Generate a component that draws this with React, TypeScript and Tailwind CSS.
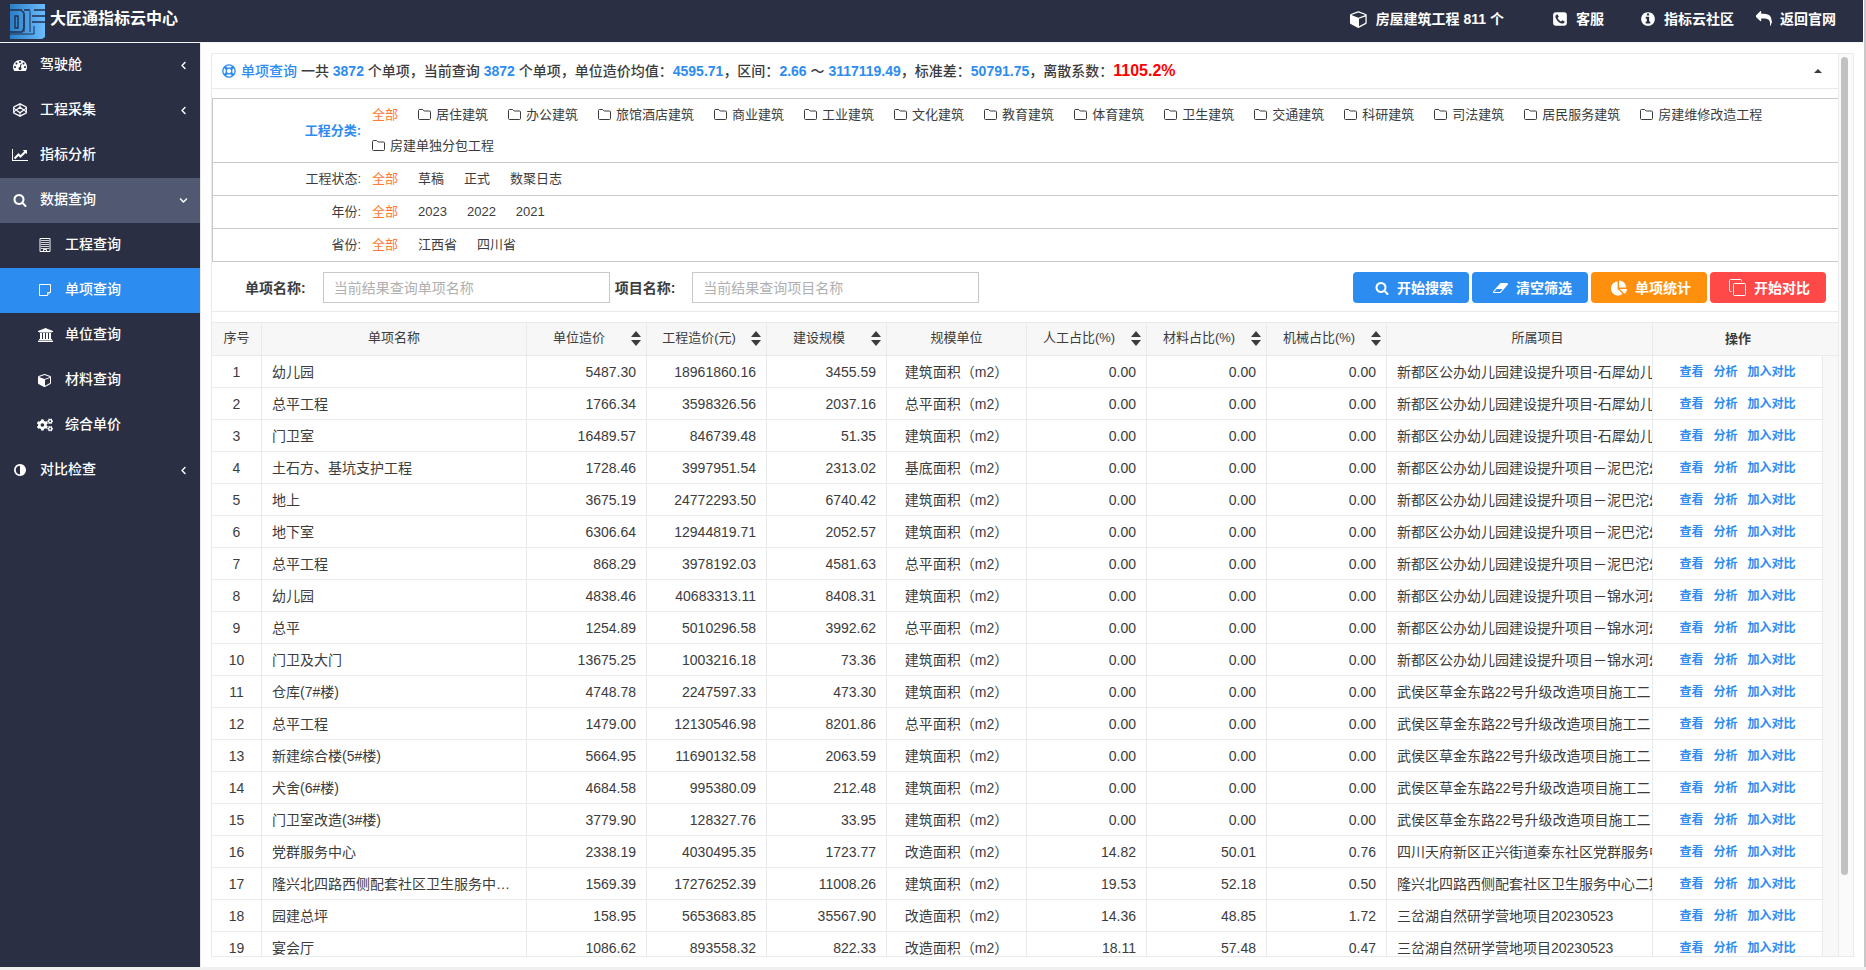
import type { ReactNode } from "react";
import { FaChartPie, FaChevronDown, FaChevronLeft, FaCogs, FaRegLifeRing } from "react-icons/fa";

const FONT = "font-['Liberation_Sans','Noto_Sans_CJK_SC',sans-serif]";

type GlyphProps = { size?: number; viewBox?: string; d: string };

function Glyph({ size = 14, viewBox = "0 0 1792 1792", d }: GlyphProps) {
  const [, , w, h] = viewBox.split(" ").map(Number);
  return (
    <svg width={(size * w) / h} height={size} viewBox={viewBox} fill="currentColor" className="shrink-0" aria-hidden="true">
      <path d={d} />
    </svg>
  );
}

const CUBE = "M896 1629l640-349v-636l-640 233v752zM832 764l698-254-698-254-698 254zM1664 512v768q0 35-18 65t-49 47l-704 384q-28 16-61 16t-61-16l-704-384q-31-17-49-47t-18-65v-768q0-40 23-73t61-47l704-256q22-8 44-8t44 8l704 256q38 14 61 47t23 73z";
const SEARCH = "M1216 832q0-185-131.5-316.5t-316.5-131.5-316.5 131.5-131.5 316.5 131.5 316.5 316.5 131.5 316.5-131.5 131.5-316.5zm512 832q0 52-38 90t-90 38q-54 0-90-38l-343-342q-179 124-399 124-143 0-273.5-55.5t-225-150-150-225-55.5-273.5 55.5-273.5 150-225 225-150 273.5-55.5 273.5 55.5 225 150 150 225 55.5 273.5q0 220-124 399l343 343q37 37 37 90z";
const GAUGE = "M384 1152q0-53-37.5-90.5t-90.5-37.5-90.5 37.5-37.5 90.5 37.5 90.5 90.5 37.5 90.5-37.5 37.5-90.5zm192-448q0-53-37.5-90.5t-90.5-37.5-90.5 37.5-37.5 90.5 37.5 90.5 90.5 37.5 90.5-37.5 37.5-90.5zm428 481l101-382q6-26-7.5-48.5t-38.5-29.5-48 6.5-30 39.5l-101 382q-60 5-107 43.5t-63 98.5q-20 77 20 146t117 89 146-20 89-117q16-60-6-117t-72-91zm660-33q0-53-37.5-90.5t-90.5-37.5-90.5 37.5-37.5 90.5 37.5 90.5 90.5 37.5 90.5-37.5 37.5-90.5zm-640-640q0-53-37.5-90.5t-90.5-37.5-90.5 37.5-37.5 90.5 37.5 90.5 90.5 37.5 90.5-37.5 37.5-90.5zm448 192q0-53-37.5-90.5t-90.5-37.5-90.5 37.5-37.5 90.5 37.5 90.5 90.5 37.5 90.5-37.5 37.5-90.5zm320 448q0 261-141 483-19 29-54 29h-1402q-35 0-54-29-141-221-141-483 0-182 71-348t191-286 286-191 348-71 348 71 286 191 191 286 71 348z";
const LINE_CHART = "M2048 1536v128h-2048v-1536h128v1408h1920zm-128-1248v435q0 21-19.5 29.5t-35.5-7.5l-121-121-633 633q-10 10-23 10t-23-10l-233-233-416 416-192-192 585-585q10-10 23-10t23 10l233 233 464-464-121-121q-16-16-7.5-35.5t29.5-19.5h435q14 0 23 9t9 23z";
const BANK = "M960 0l960 384v128h-128q0 26-20.5 45t-48.5 19h-1526q-28 0-48.5-19t-20.5-45h-128v-128zm-704 640h256v768h128v-768h256v768h128v-768h256v768h128v-768h256v768h59q28 0 48.5 19t20.5 45v64h-1664v-64q0-26 20.5-45t48.5-19h59v-768zm1595 960q28 0 48.5 19t20.5 45v128h-1920v-128q0-26 20.5-45t48.5-19h1782z";
const HALF_CIRCLE = "M896 1440v-1088q-148 0-273 73t-198 198-73 273 73 273 198 198 273 73zm768-544q0 209-103 385.5t-279.5 279.5-385.5 103-385.5-103-279.5-279.5-103-385.5 103-385.5 279.5-279.5 385.5-103 385.5 103 279.5 279.5 103 385.5z";
const INFO = "M1152 1376v-160q0-14-9-23t-23-9h-96v-512q0-14-9-23t-23-9h-320q-14 0-23 9t-9 23v160q0 14 9 23t23 9h96v320h-96q-14 0-23 9t-9 23v160q0 14 9 23t23 9h448q14 0 23-9t9-23zm-128-896v-160q0-14-9-23t-23-9h-192q-14 0-23 9t-9 23v160q0 14 9 23t23 9h192q14 0 23-9t9-23zm640 416q0 209-103 385.5t-279.5 279.5-385.5 103-385.5-103-279.5-279.5-103-385.5 103-385.5 279.5-279.5 385.5-103 385.5 103 279.5 279.5 103 385.5z";
const REPLY = "M1792 1120q0 166-127 451-3 7-10.5 24t-13.5 30-13 22q-12 17-28 17-15 0-23.5-10t-8.5-25q0-9 2.5-26.5t2.5-23.5q5-68 5-123 0-112-19.5-200.5t-54-153.5-89-112-115.5-78.5-144-49.5-164.5-24-187-6.5h-224v256q0 26-19 45t-45 19-45-19l-512-512q-19-19-19-45t19-45l512-512q19-19 45-19t45 19 19 45v256h224q713 0 875 403 53 134 53 333z";
const PHONE = "M1408 1193q0-11-2-16t-18-16.5-40.5-25-47.5-26.5-45.5-25-28.5-15q-5-3-19-13t-25-15-21-5q-15 0-36.5 20.5t-39.5 45-38.5 45-33.5 20.5q-7 0-16.5-3.5t-15.5-6.5-17-9.5-14-8.5q-99-55-170-126.5t-127-170.5q-2-3-8.5-14t-9.5-17-6.5-15.5-3.5-16.5q0-13 20.5-33.5t45-38.5 45-39.5 20.5-36.5q0-10-5-21t-15-25-13-19q-3-6-15-28.5t-25-45.5-26.5-47.5-25-40.5-16.5-18-16-2q-48 0-101 22-46 21-80 94.5t-34 130.5q0 16 2.5 34t5 30.5 9 33 10 29.5 12.5 33 11 30q60 164 216.5 320.5t320.5 216.5q6 2 30 11t33 12.5 29.5 10 33 9 30.5 5 34 2.5q57 0 130.5-34t94.5-80q22-53 22-101zm256-777v960q0 119-84.5 203.5t-203.5 84.5h-960q-119 0-203.5-84.5t-84.5-203.5v-960q0-119 84.5-203.5t203.5-84.5h960q119 0 203.5 84.5t84.5 203.5z";
const ERASER = "M896 1408l336-384h-768l-336 384h768zm1013-1077q15 34 9.5 71.5t-30.5 65.5l-896 1024q-38 44-96 44h-768q-38 0-69.5-20.5t-47.5-54.5q-15-34-9.5-71.5t30.5-65.5l896-1024q38-44 96-44h768q38 0 69.5 20.5t47.5 54.5z";

function HexIcon() {
  return (
    <svg width="14" height="14" viewBox="0 0 14 14" fill="none" stroke="currentColor" strokeWidth="1.4" strokeLinejoin="round" aria-hidden="true">
      <path d="M7 .8 13.2 4v6L7 13.2.8 10V4z" />
      <path d="M7 4.2 10.8 7 7 9.8 3.2 7z" />
      <path d="M7 .8v3.4M7 9.8v3.4M.8 4.8l2.4 2.2L.8 9.2M13.2 4.8 10.8 7l2.4 2.2" strokeWidth="1" />
    </svg>
  );
}

function BuildingIcon() {
  return (
    <svg width="12" height="14" viewBox="0 0 12 14" fill="none" stroke="currentColor" aria-hidden="true">
      <path d="M1 .5h10v13H1z" />
      <path d="M2 2.5h8M2 4.5h8M2 6.5h8M2 8.5h8M2 10.5h8" opacity=".8" />
      <path d="M4.5 13v-1.5h3V13" />
    </svg>
  );
}

function NoteIcon() {
  return (
    <svg width="12" height="12" viewBox="0 0 12 12" fill="none" stroke="currentColor" aria-hidden="true">
      <path d="M.5.5h11v7.6l-3.4 3.4H.5z" />
      <path d="M11.5 8.5h-3v3" />
    </svg>
  );
}

function CopyIcon() {
  return (
    <svg width="17" height="17" viewBox="0 0 17 17" fill="none" stroke="currentColor" aria-hidden="true">
      <rect x="4.5" y="4.5" width="12" height="12" rx="1" />
      <path d="M2.5 12.5h-1a1 1 0 0 1-1-1v-10a1 1 0 0 1 1-1h10a1 1 0 0 1 1 1v1" />
    </svg>
  );
}

function FolderIcon() {
  return (
    <svg width="13" height="11" viewBox="0 0 13 11" fill="none" stroke="currentColor" aria-hidden="true">
      <path d="M.5 1.5a1 1 0 0 1 1-1h3.2l1.5 1.5h5.3a1 1 0 0 1 1 1v6.5a1 1 0 0 1-1 1h-10a1 1 0 0 1-1-1z" />
    </svg>
  );
}

// the strokes are the gaps between the three letter shapes
function Logo() {
  return (
    <svg width="35" height="35" viewBox="0 0 35 35" aria-hidden="true">
      <defs>
        <linearGradient id="logo" x1="0" x2="1" y1="0" y2="0">
          <stop offset="0" stopColor="#2a7fc8" />
          <stop offset="1" stopColor="#6cbcff" />
        </linearGradient>
      </defs>
      <path d="M0 0h35v33l-3 2H0z" fill="url(#logo)" />
      <g fill="none" stroke="#22304e">
        <path d="M0 6h11l3 3v15l-2 4H0M14 6h6M24 6h11" strokeWidth="1.4" />
        <path d="M5 12h3v12H5z" strokeWidth="1.4" />
        <path d="M14 28V10M20 7v21M22 30h2v-8M0 30h22" strokeWidth="1" />
        <path d="M22 12h13M22 18h13" strokeWidth="1.4" />
      </g>
    </svg>
  );
}

type NavItem = { label: string; icon: ReactNode; child?: boolean; arrow?: "left" | "down"; active?: boolean };

const nav: NavItem[] = [
  { label: "驾驶舱", icon: <Glyph d={GAUGE} />, arrow: "left" },
  { label: "工程采集", icon: <HexIcon />, arrow: "left" },
  { label: "指标分析", icon: <Glyph d={LINE_CHART} viewBox="0 0 2048 1792" /> },
  { label: "数据查询", icon: <Glyph d={SEARCH} />, arrow: "down" },
  { label: "工程查询", icon: <BuildingIcon />, child: true },
  { label: "单项查询", icon: <NoteIcon />, child: true, active: true },
  { label: "单位查询", icon: <Glyph d={BANK} viewBox="0 0 1920 1792" />, child: true },
  { label: "材料查询", icon: <Glyph d={CUBE} />, child: true },
  { label: "综合单价", icon: <FaCogs size={16} />, child: true },
  { label: "对比检查", icon: <Glyph d={HALF_CIRCLE} />, arrow: "left" },
];

const categories = [
  "居住建筑", "办公建筑", "旅馆酒店建筑", "商业建筑", "工业建筑", "文化建筑", "教育建筑", "体育建筑",
  "卫生建筑", "交通建筑", "科研建筑", "司法建筑", "居民服务建筑", "房建维修改造工程", "房建单独分包工程",
];

const filters = [
  { label: "工程分类:", options: categories, folder: true },
  { label: "工程状态:", options: ["草稿", "正式", "数聚日志"] },
  { label: "年份:", options: ["2023", "2022", "2021"] },
  { label: "省份:", options: ["江西省", "四川省"] },
];

const columns = [
  { title: "序号", width: "w-[50px]" },
  { title: "单项名称", width: "w-[265px]" },
  { title: "单位造价", width: "w-[120px]", sort: true },
  { title: "工程造价(元)", width: "w-[120px]", sort: true },
  { title: "建设规模", width: "w-[120px]", sort: true },
  { title: "规模单位", width: "w-[140px]" },
  { title: "人工占比(%)", width: "w-[120px]", sort: true },
  { title: "材料占比(%)", width: "w-[120px]", sort: true },
  { title: "机械占比(%)", width: "w-[120px]", sort: true },
  { title: "所属项目", width: "pl-9" },
];

const SX = "新都区公办幼儿园建设提升项目-石犀幼儿";
const NB = "新都区公办幼儿园建设提升项目－泥巴沱幼";
const JS = "新都区公办幼儿园建设提升项目－锦水河幼";
const WH = "武侯区草金东路22号升级改造项目施工二";

const rows = [
  ["幼儿园", "5487.30", "18961860.16", "3455.59", "建筑面积（m2）", "0.00", "0.00", "0.00", SX],
  ["总平工程", "1766.34", "3598326.56", "2037.16", "总平面积（m2）", "0.00", "0.00", "0.00", SX],
  ["门卫室", "16489.57", "846739.48", "51.35", "建筑面积（m2）", "0.00", "0.00", "0.00", SX],
  ["土石方、基坑支护工程", "1728.46", "3997951.54", "2313.02", "基底面积（m2）", "0.00", "0.00", "0.00", NB],
  ["地上", "3675.19", "24772293.50", "6740.42", "建筑面积（m2）", "0.00", "0.00", "0.00", NB],
  ["地下室", "6306.64", "12944819.71", "2052.57", "建筑面积（m2）", "0.00", "0.00", "0.00", NB],
  ["总平工程", "868.29", "3978192.03", "4581.63", "总平面积（m2）", "0.00", "0.00", "0.00", NB],
  ["幼儿园", "4838.46", "40683313.11", "8408.31", "建筑面积（m2）", "0.00", "0.00", "0.00", JS],
  ["总平", "1254.89", "5010296.58", "3992.62", "总平面积（m2）", "0.00", "0.00", "0.00", JS],
  ["门卫及大门", "13675.25", "1003216.18", "73.36", "建筑面积（m2）", "0.00", "0.00", "0.00", JS],
  ["仓库(7#楼)", "4748.78", "2247597.33", "473.30", "建筑面积（m2）", "0.00", "0.00", "0.00", WH],
  ["总平工程", "1479.00", "12130546.98", "8201.86", "总平面积（m2）", "0.00", "0.00", "0.00", WH],
  ["新建综合楼(5#楼)", "5664.95", "11690132.58", "2063.59", "建筑面积（m2）", "0.00", "0.00", "0.00", WH],
  ["犬舍(6#楼)", "4684.58", "995380.09", "212.48", "建筑面积（m2）", "0.00", "0.00", "0.00", WH],
  ["门卫室改造(3#楼)", "3779.90", "128327.76", "33.95", "建筑面积（m2）", "0.00", "0.00", "0.00", WH],
  ["党群服务中心", "2338.19", "4030495.35", "1723.77", "改造面积（m2）", "14.82", "50.01", "0.76", "四川天府新区正兴街道秦东社区党群服务中"],
  ["隆兴北四路西侧配套社区卫生服务中心二期", "1569.39", "17276252.39", "11008.26", "建筑面积（m2）", "19.53", "52.18", "0.50", "隆兴北四路西侧配套社区卫生服务中心二期"],
  ["园建总坪", "158.95", "5653683.85", "35567.90", "改造面积（m2）", "14.36", "48.85", "1.72", "三岔湖自然研学营地项目20230523"],
  ["宴会厅", "1086.62", "893558.32", "822.33", "改造面积（m2）", "18.11", "57.48", "0.47", "三岔湖自然研学营地项目20230523"],
];

function Header() {
  return (
    <header className="flex h-[43px] shrink-0 items-center border-b border-gray-100 bg-[#2a2f44] pb-1 pl-[10px] pr-[27px] text-sm font-bold text-white">
      <div className="flex items-center gap-[5px] pt-1 text-base">
        <Logo />
        <h1 className="pb-1">大匠通指标云中心</h1>
      </div>
      <a href="#" className="ml-auto flex items-center gap-2">
        <Glyph d={CUBE} size={18} />
        房屋建筑工程 811 个
      </a>
      <a href="#" className="ml-12 flex items-center gap-2">
        <Glyph d={PHONE} size={16} />
        客服
      </a>
      <a href="#" className="ml-9 flex items-center gap-2">
        <Glyph d={INFO} size={16} />
        指标云社区
      </a>
      <a href="#" className="ml-[22px] flex items-center gap-2">
        <Glyph d={REPLY} size={16} />
        返回官网
      </a>
    </header>
  );
}

function Sidebar() {
  return (
    <nav className="w-[200px] shrink-0 bg-[#2a2f44] text-sm font-medium text-white">
      {nav.map((item) => (
        <a
          key={item.label}
          href="#"
          className={`flex h-[45px] items-center pb-px pr-[12px] ${item.child ? "pl-[35px]" : "pl-[10px]"} ${
            item.active ? "bg-[#2d8cf0]" : item.arrow === "down" ? "bg-[#515872]" : ""
          }`}
        >
          <span className="flex w-5 justify-center">{item.icon}</span>
          <span className="ml-[10px] pb-[2px]">{item.label}</span>
          {item.arrow === "left" && <FaChevronLeft size={9} className="ml-auto" />}
          {item.arrow === "down" && <FaChevronDown size={9} className="ml-auto" />}
        </a>
      ))}
    </nav>
  );
}

function Blue({ children }: { children: ReactNode }) {
  return <b className="text-[#2d8cf0]">{children}</b>;
}

function Summary() {
  return (
    <div className="flex h-[35px] items-center border-b border-[#e8eaec] pl-[10px] pr-4 text-sm font-medium">
      <FaRegLifeRing size={14} className="text-[#2d8cf0]" />
      <p className="ml-[5px]">
        <span className="text-[#2d8cf0]">单项查询</span> 一共 <Blue>3872</Blue> 个单项，当前查询 <Blue>3872</Blue> 个单项，单位造价均值：
        <Blue>4595.71</Blue>，区间：<Blue>2.66</Blue> ～ <Blue>3117119.49</Blue>，标准差：<Blue>50791.75</Blue>，离散系数：
        <b className="text-base text-[#ff0000]">1105.2%</b>
      </p>
      <button type="button" aria-label="收起" className="ml-auto">
        <svg width="8" height="4" viewBox="0 0 8 4" fill="currentColor" aria-hidden="true">
          <path d="M4 0l4 4H0z" />
        </svg>
      </button>
    </div>
  );
}

function Filters() {
  return (
    <div className="mt-[9px] border-l border-t border-[#c8c8c8] text-[13px] leading-[31px]">
      {filters.map((filter) => (
        <div key={filter.label} className="flex items-center border-b border-[#c8c8c8] pb-px">
          <span className={`w-[148px] shrink-0 text-right ${filter.folder ? "font-bold text-[#2d8cf0]" : ""}`}>{filter.label}</span>
          <div className="ml-[11px] flex flex-wrap gap-x-5">
            <button type="button" className="text-[#ff7a33]">全部</button>
            {filter.options.map((option) => (
              <button key={option} type="button" className="flex items-center gap-[5px]">
                {filter.folder && <FolderIcon />}
                {option}
              </button>
            ))}
          </div>
        </div>
      ))}
    </div>
  );
}

function SearchField({ id, label, placeholder }: { id: string; label: string; placeholder: string }) {
  return (
    <div className="flex items-center gap-[17px]">
      <label htmlFor={id} className="font-bold">{label}</label>
      <input id={id} placeholder={placeholder} className="h-[31px] w-[287px] border border-[#c8c8c8] px-[10px] placeholder:text-[#b0b0b0]" />
    </div>
  );
}

function ActionButton({ color, icon, children }: { color: string; icon: ReactNode; children: ReactNode }) {
  return (
    <button type="button" className={`flex h-[31px] w-[116px] items-center justify-end gap-2 rounded-sm pr-4 font-bold text-white ${color}`}>
      {icon}
      {children}
    </button>
  );
}

function SearchBar() {
  return (
    <form className="flex items-center gap-[5px] border-b border-[#e8eaec] pb-2 pl-[33px] pr-3 pt-[10px] text-sm">
      <SearchField id="item" label="单项名称:" placeholder="当前结果查询单项名称" />
      <SearchField id="project" label="项目名称:" placeholder="当前结果查询项目名称" />
      <div className="ml-auto flex gap-[3px]">
        <ActionButton color="bg-[#2d8cf0]" icon={<Glyph d={SEARCH} />}>开始搜索</ActionButton>
        <ActionButton color="bg-[#2d8cf0]" icon={<Glyph d={ERASER} viewBox="0 0 1920 1792" />}>清空筛选</ActionButton>
        <ActionButton color="bg-[#ff900d]" icon={<FaChartPie size={16} />}>单项统计</ActionButton>
        <ActionButton color="bg-[#ff4949]" icon={<CopyIcon />}>开始对比</ActionButton>
      </div>
    </form>
  );
}

function SortArrows() {
  return (
    <svg width="10" height="15" viewBox="0 0 10 15" fill="currentColor" aria-hidden="true">
      <path d="M5 0l5 6H0zM5 15l5-6H0z" />
    </svg>
  );
}

const cell = "h-8 overflow-hidden whitespace-nowrap border-b border-r border-[#e8eaec] px-[10px]";

function DataTable() {
  return (
    <div className="mt-[10px] min-h-0 flex-1 overflow-hidden border-t border-[#e8eaec]">
      <table className="w-full table-fixed border-separate border-spacing-0 text-sm">
        <thead className="bg-[#f7f7f7] text-[13px]">
          <tr>
            {columns.map((column) => (
              <th key={column.title} className={`h-[33px] border-b border-r border-[#e8eaec] pb-px font-normal ${column.width}`}>
                <span className={`flex items-center ${column.sort ? "pr-[5px]" : ""}`}>
                  <span className="flex-1">{column.title}</span>
                  {column.sort && <SortArrows />}
                </span>
              </th>
            ))}
            <th className="w-[170px] border-b border-[#e8eaec] p-0">操作</th>
            <th className="w-[15px] border-b border-[#e8eaec] p-0" aria-label="滚动条" />
          </tr>
        </thead>
        <tbody>
          {rows.map((row, i) => (
            <tr key={i}>
              <td className={`${cell} text-center`}>{i + 1}</td>
              <td className={`${cell} text-ellipsis`}>{row[0]}</td>
              <td className={`${cell} text-right`}>{row[1]}</td>
              <td className={`${cell} text-right`}>{row[2]}</td>
              <td className={`${cell} text-right`}>{row[3]}</td>
              <td className={`${cell} text-center`}>{row[4]}</td>
              <td className={`${cell} text-right`}>{row[5]}</td>
              <td className={`${cell} text-right`}>{row[6]}</td>
              <td className={`${cell} text-right`}>{row[7]}</td>
              <td className={`${cell} text-clip`}>{row[8]}</td>
              <td className={cell}>
                <div className="flex justify-center gap-[10px] pt-px text-xs font-bold text-[#2d8cf0]">
                  <a href="#">查看</a>
                  <a href="#">分析</a>
                  <a href="#">加入对比</a>
                </div>
              </td>
              {i === 0 && <td rowSpan={rows.length} className="bg-[#f8f8f8]" />}
            </tr>
          ))}
        </tbody>
      </table>
    </div>
  );
}

export default function App() {
  return (
    <div className={`h-screen bg-[#f0f0f0] pb-[3px] text-[#3c3c3c] ${FONT}`}>
      <div className="flex h-full flex-col border-r-2 border-[#c8c8c8] bg-white pr-px">
        <Header />
        <div className="flex min-h-0 flex-1">
          <Sidebar />
          <main className="flex min-w-0 flex-1 border-l border-[#e8eaec] pb-[10px] pl-[10px] pr-[9px] pt-[10px]">
            <section className="flex min-w-0 flex-1 border border-[#e8eaec]">
              <div className="flex min-w-0 flex-1 flex-col">
                <Summary />
                <Filters />
                <SearchBar />
                <DataTable />
              </div>
              <div className="w-[15px] shrink-0 border-l border-[#e8eaec] bg-[#fafafa] pl-[2px] pt-[3px]">
                <div className="h-[91%] w-[7px] rounded-full bg-[#c1c1c1]" />
              </div>
            </section>
          </main>
        </div>
      </div>
    </div>
  );
}
